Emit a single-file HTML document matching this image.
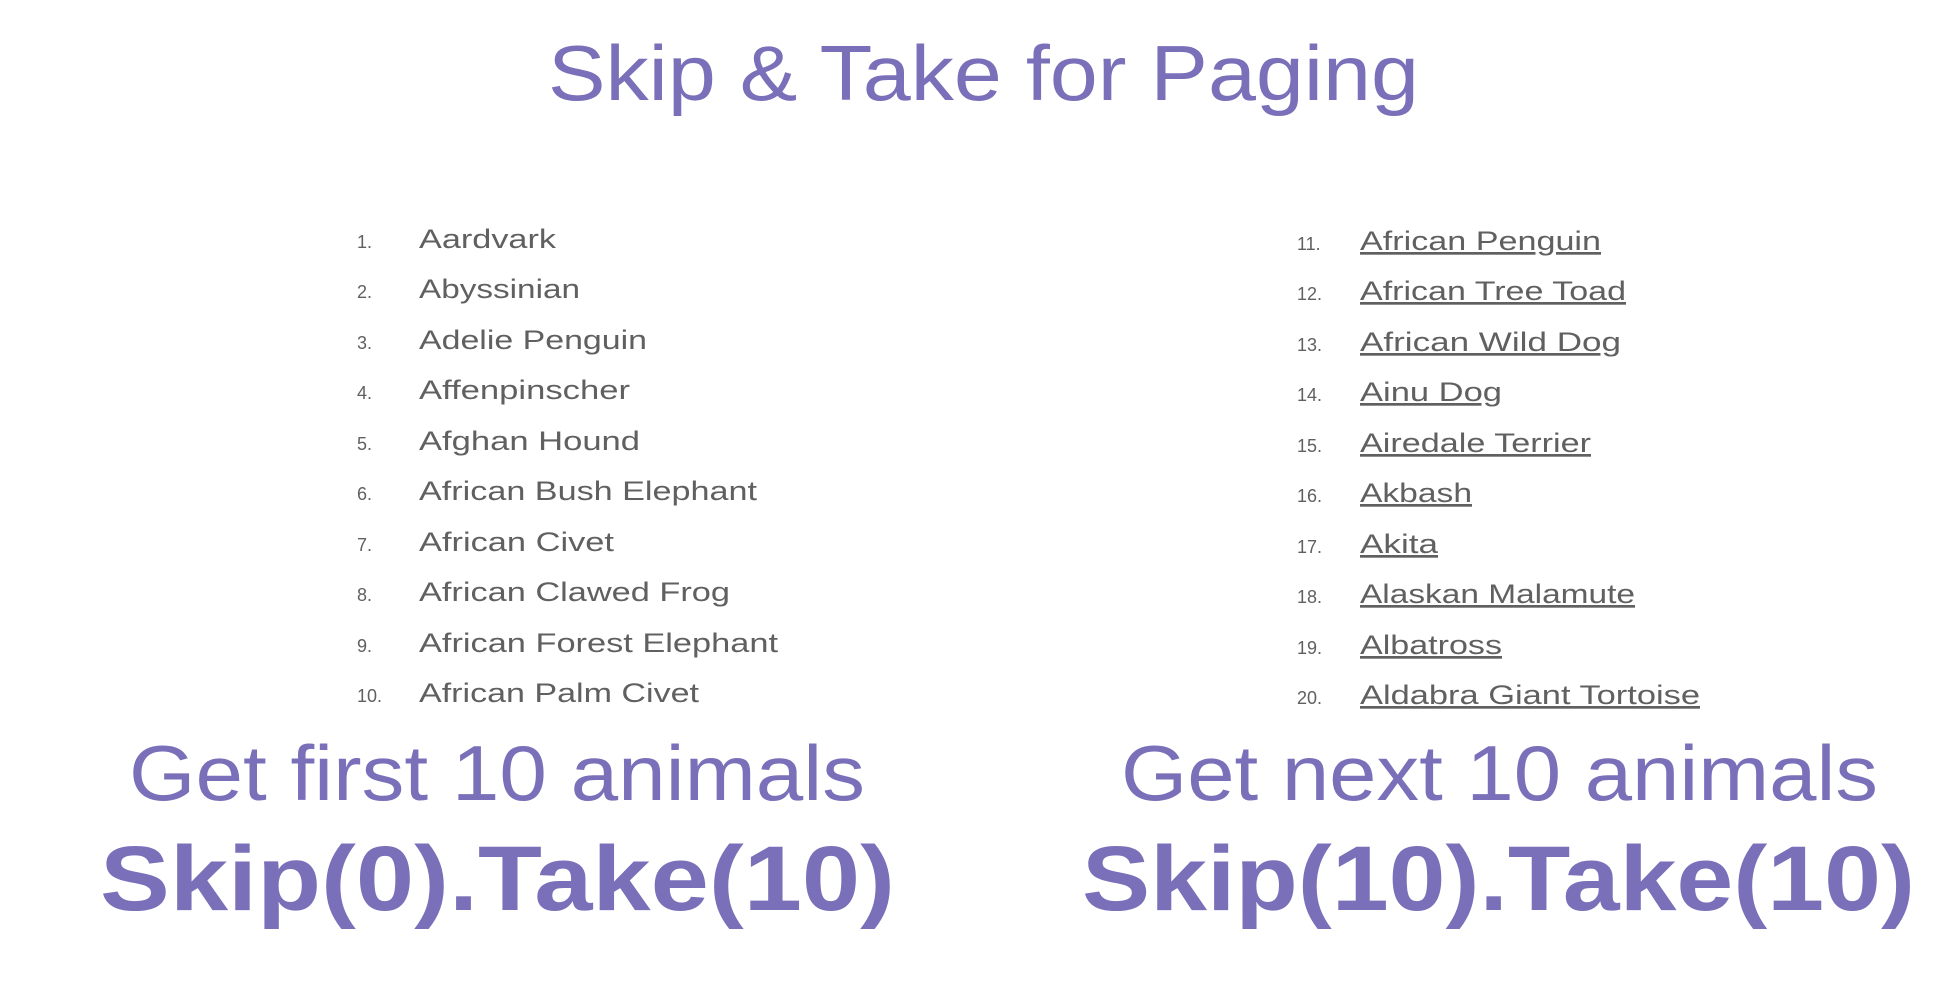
<!DOCTYPE html>
<html><head><meta charset="utf-8"><style>
html,body{margin:0;padding:0;background:#fff;width:1950px;height:984px;overflow:hidden}
svg{display:block}
.t{font-family:"Liberation Sans",sans-serif;fill:#7a6fb9}
.n{font-family:"Liberation Sans",sans-serif;fill:#606060;font-size:18px}
.a{font-family:"Liberation Sans",sans-serif;fill:#606060;font-size:27px}
.u{text-decoration:underline}
</style></head><body>
<svg width="1950" height="984" xmlns="http://www.w3.org/2000/svg">
<text class="t" x="548" y="100" font-size="78" textLength="871" lengthAdjust="spacingAndGlyphs">Skip &amp; Take for Paging</text>
<g>
<text class="n" x="357" y="248">1.</text><text class="a" x="419" y="248" textLength="137" lengthAdjust="spacingAndGlyphs">Aardvark</text>
<text class="n" x="357" y="298">2.</text><text class="a" x="419" y="298" textLength="161" lengthAdjust="spacingAndGlyphs">Abyssinian</text>
<text class="n" x="357" y="349">3.</text><text class="a" x="419" y="349" textLength="228" lengthAdjust="spacingAndGlyphs">Adelie Penguin</text>
<text class="n" x="357" y="399">4.</text><text class="a" x="419" y="399" textLength="211" lengthAdjust="spacingAndGlyphs">Affenpinscher</text>
<text class="n" x="357" y="450">5.</text><text class="a" x="419" y="450" textLength="221" lengthAdjust="spacingAndGlyphs">Afghan Hound</text>
<text class="n" x="357" y="500">6.</text><text class="a" x="419" y="500" textLength="338" lengthAdjust="spacingAndGlyphs">African Bush Elephant</text>
<text class="n" x="357" y="551">7.</text><text class="a" x="419" y="551" textLength="195" lengthAdjust="spacingAndGlyphs">African Civet</text>
<text class="n" x="357" y="601">8.</text><text class="a" x="419" y="601" textLength="311" lengthAdjust="spacingAndGlyphs">African Clawed Frog</text>
<text class="n" x="357" y="652">9.</text><text class="a" x="419" y="652" textLength="359" lengthAdjust="spacingAndGlyphs">African Forest Elephant</text>
<text class="n" x="357" y="702">10.</text><text class="a" x="419" y="702" textLength="280" lengthAdjust="spacingAndGlyphs">African Palm Civet</text>
</g>
<g>
<text class="n" x="1297" y="250">11.</text><text class="a u" x="1360" y="250" textLength="241" lengthAdjust="spacingAndGlyphs">African Penguin</text>
<text class="n" x="1297" y="300">12.</text><text class="a u" x="1360" y="300" textLength="266" lengthAdjust="spacingAndGlyphs">African Tree Toad</text>
<text class="n" x="1297" y="351">13.</text><text class="a u" x="1360" y="351" textLength="261" lengthAdjust="spacingAndGlyphs">African Wild Dog</text>
<text class="n" x="1297" y="401">14.</text><text class="a u" x="1360" y="401" textLength="142" lengthAdjust="spacingAndGlyphs">Ainu Dog</text>
<text class="n" x="1297" y="452">15.</text><text class="a u" x="1360" y="452" textLength="231" lengthAdjust="spacingAndGlyphs">Airedale Terrier</text>
<text class="n" x="1297" y="502">16.</text><text class="a u" x="1360" y="502" textLength="112" lengthAdjust="spacingAndGlyphs">Akbash</text>
<text class="n" x="1297" y="553">17.</text><text class="a u" x="1360" y="553" textLength="78" lengthAdjust="spacingAndGlyphs">Akita</text>
<text class="n" x="1297" y="603">18.</text><text class="a u" x="1360" y="603" textLength="275" lengthAdjust="spacingAndGlyphs">Alaskan Malamute</text>
<text class="n" x="1297" y="654">19.</text><text class="a u" x="1360" y="654" textLength="142" lengthAdjust="spacingAndGlyphs">Albatross</text>
<text class="n" x="1297" y="704">20.</text><text class="a u" x="1360" y="704" textLength="340" lengthAdjust="spacingAndGlyphs">Aldabra Giant Tortoise</text>
</g>
<text class="t" x="129" y="800" font-size="78" textLength="736" lengthAdjust="spacingAndGlyphs">Get first 10 animals</text>
<text class="t" x="1121" y="800" font-size="78" textLength="757" lengthAdjust="spacingAndGlyphs">Get next 10 animals</text>
<text class="t" x="100" y="910" font-size="92" font-weight="bold" textLength="795" lengthAdjust="spacingAndGlyphs">Skip(0).Take(10)</text>
<text class="t" x="1082" y="910" font-size="92" font-weight="bold" textLength="833" lengthAdjust="spacingAndGlyphs">Skip(10).Take(10)</text>
</svg>
</body></html>
